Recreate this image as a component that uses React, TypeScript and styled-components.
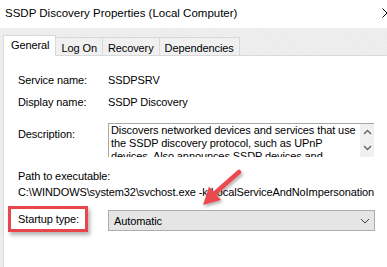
import React from "react";
import styled, { createGlobalStyle } from "styled-components";

const GlobalStyle = createGlobalStyle`
  html, body {
    margin: 0;
    padding: 0;
    background: #ffffff;
    overflow: hidden;
  }
  body {
    font-family: "Liberation Sans", Arial, sans-serif;
    font-size: 11px;
    letter-spacing: -0.1px;
    color: #000000;
  }
`;

const descriptionLines = [
  "Discovers networked devices and services that use",
  "the SSDP discovery protocol, such as UPnP",
  "devices. Also announces SSDP devices and",
];

const tabs = [
  { label: "General", active: true },
  { label: "Log On" },
  { label: "Recovery" },
  { label: "Dependencies" },
];

const App = () => {
  return (
    <>
      <GlobalStyle />
      <Window>
        <TitleBar>
          <Title>SSDP Discovery Properties (Local Computer)</Title>
          <CloseIcon width="10" height="10" viewBox="0 0 10 10">
            <path d="M0.5 0.5 L9.5 9.5 M9.5 0.5 L0.5 9.5" stroke="#000" strokeWidth="1" />
          </CloseIcon>
        </TitleBar>
        <Body>
          <TabStrip>
            {tabs.map((t) => (
              <Tab key={t.label} $active={t.active}>
                {t.label}
              </Tab>
            ))}
          </TabStrip>
          <Panel>
            <Row>
              <Label>Service name:</Label>
              <Value>SSDPSRV</Value>
            </Row>
            <Row $gap={8}>
              <Label>Display name:</Label>
              <Value>SSDP Discovery</Value>
            </Row>
            <Row $gap={14}>
              <Label $offset={4}>Description:</Label>
              <TextBox>
                <TextLines>
                  {descriptionLines.map((l) => (
                    <div key={l}>{l}</div>
                  ))}
                </TextLines>
                <ScrollBar>
                  <svg width="9" height="6" viewBox="0 0 9 6">
                    <path d="M1 5 L4.5 1.5 L8 5" fill="none" stroke="#606060" strokeWidth="1.3" />
                  </svg>
                  <svg width="9" height="6" viewBox="0 0 9 6">
                    <path d="M1 1 L4.5 4.5 L8 1" fill="none" stroke="#606060" strokeWidth="1.3" />
                  </svg>
                </ScrollBar>
              </TextBox>
            </Row>
            <Line $gap={12}>Path to executable:</Line>
            <Line $gap={2}>
              C:\WINDOWS\system32\svchost.exe -k LocalServiceAndNoImpersonation
            </Line>
            <StartupRow>
              <Highlight>Startup type:</Highlight>
              <Combo>
                <span>Automatic</span>
                <svg width="10" height="6" viewBox="0 0 10 6">
                  <path d="M1 1 L5 5 L9 1" fill="none" stroke="#404040" strokeWidth="1" />
                </svg>
              </Combo>
            </StartupRow>
          </Panel>
        </Body>
        <ArrowOverlay width="387" height="267" viewBox="0 0 387 267">
          <g filter="url(#arrowShadow)">
            <line x1="239" y1="172" x2="214" y2="194" stroke="#ec4a4f" strokeWidth="4.5" strokeLinecap="round" />
            <polygon points="203,205 221,200 209,186.5" fill="#ec4a4f" />
          </g>
          <defs>
            <filter id="arrowShadow" x="-20%" y="-20%" width="160%" height="160%">
              <feDropShadow dx="1.5" dy="2" stdDeviation="1.5" floodColor="#000" floodOpacity="0.3" />
            </filter>
          </defs>
        </ArrowOverlay>
      </Window>
    </>
  );
};

export default App;

const Window = styled.div`
  position: relative;
  width: 387px;
  height: 267px;
  display: flex;
  flex-direction: column;
  overflow: hidden;
  background: #ffffff;
`;

const TitleBar = styled.div`
  height: 28px;
  flex: none;
  display: flex;
  align-items: center;
  justify-content: space-between;
  padding-left: 5px;
  background: #ffffff;
`;

const Title = styled.span`
  font-size: 11.5px;
  letter-spacing: 0;
  padding-bottom: 2px;
`;

const CloseIcon = styled.svg`
  margin-right: -5px;
  margin-bottom: 3px;
`;

const Body = styled.div`
  flex: 1;
  display: flex;
  flex-direction: column;
  padding: 7px 0 0 3px;
  background-color: #efefef;
  background-image: repeating-linear-gradient(
    45deg,
    rgba(0, 0, 0, 0.015) 0px,
    rgba(0, 0, 0, 0.015) 1px,
    transparent 1px,
    transparent 2px
  );
`;

const TabStrip = styled.div`
  height: 20px;
  flex: none;
  display: flex;
  align-items: flex-start;
  position: relative;
  z-index: 1;
`;

const Tab = styled.div<{ $active?: boolean }>`
  box-sizing: border-box;
  height: ${(p) => (p.$active ? 21 : 18)}px;
  margin-top: ${(p) => (p.$active ? 0 : 2)}px;
  padding: ${(p) => (p.$active ? "2px 6px 0 7px" : "3px 5px 0")};
  border: 1px solid #d9d9d9;
  border-bottom: none;
  margin-left: ${(p) => (p.$active ? 0 : -1)}px;
  background: ${(p) => (p.$active ? "#ffffff" : "#f0f0f0")};
  line-height: 14px;
  white-space: nowrap;
`;

const Panel = styled.div`
  flex: 1;
  display: flex;
  flex-direction: column;
  padding: 17px 0 0 14px;
  background: #ffffff;
  border-top: 1px solid #d9d9d9;
  border-left: 1px solid #d9d9d9;
`;

const Row = styled.div<{ $gap?: number }>`
  display: flex;
  align-items: flex-start;
  margin-top: ${(p) => p.$gap ?? 0}px;
  line-height: 14px;
`;

const Label = styled.div<{ $offset?: number }>`
  width: 90px;
  flex: none;
  padding-top: ${(p) => p.$offset ?? 0}px;
`;

const Value = styled.div`
  white-space: nowrap;
`;

const TextBox = styled.div`
  width: 266px;
  height: 34px;
  display: flex;
  overflow: hidden;
  border-top: 1px solid #a8a8a8;
  border-left: 1px solid #a8a8a8;
  box-sizing: border-box;
`;

const TextLines = styled.div`
  flex: 1;
  padding: 0 0 0 2px;
  line-height: 13px;
  white-space: nowrap;
  overflow: hidden;
`;

const ScrollBar = styled.div`
  width: 14px;
  flex: none;
  display: flex;
  flex-direction: column;
  align-items: center;
  justify-content: space-between;
  padding: 5px 0 6px;
  box-sizing: border-box;
  background: #f0f0f0;
`;

const Line = styled.div<{ $gap: number }>`
  margin-top: ${(p) => p.$gap}px;
  line-height: 14px;
  white-space: nowrap;
`;

const StartupRow = styled.div`
  display: flex;
  align-items: flex-start;
  margin-top: 7px;
`;

const Highlight = styled.div`
  box-sizing: border-box;
  width: 80px;
  height: 26px;
  margin-left: -10px;
  padding-left: 7px;
  display: flex;
  align-items: center;
  border: 3px solid #e9464b;
  box-shadow: 2px 3px 4px rgba(0, 0, 0, 0.3);
  white-space: nowrap;
`;

const Combo = styled.div`
  box-sizing: border-box;
  width: 267px;
  height: 21px;
  margin: 4px 0 0 20px;
  padding: 0 4px 0 5px;
  display: flex;
  align-items: center;
  justify-content: space-between;
  background: #e5e5e5;
  border: 1px solid #adadad;
`;

const ArrowOverlay = styled.svg`
  position: absolute;
  left: 0;
  top: 0;
  pointer-events: none;
  overflow: visible;
`;
